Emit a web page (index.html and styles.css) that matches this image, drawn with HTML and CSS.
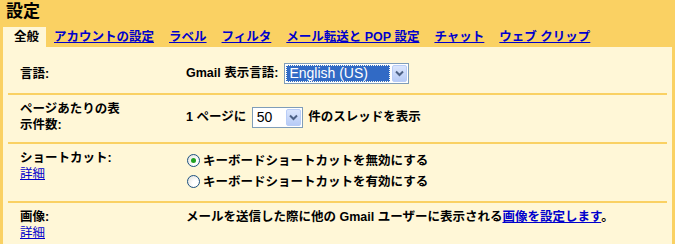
FILE: index.html
```html
<!DOCTYPE html>
<html lang="ja">
<head>
  <meta charset="UTF-8">
  <title>設定</title>
  <link rel="stylesheet" href="styles.css">
</head>
<body>
  <h1 class="title">設定</h1>

  <div class="tabs">
    <span class="tab active">全般</span>
    <a class="tab" href="#">アカウントの設定</a>
    <a class="tab" href="#">ラベル</a>
    <a class="tab" href="#">フィルタ</a>
    <a class="tab" href="#">メール転送と POP 設定</a>
    <a class="tab" href="#">チャット</a>
    <a class="tab" href="#">ウェブ クリップ</a>
  </div>

  <div class="panel">
    <div class="row first">
      <div class="label">言語:</div>
      <div class="value">
        Gmail 表示言語:<span class="select wide">
          <span class="select-text focused">English (US)</span>
          <span class="select-btn"><svg width="9" height="7" viewBox="0 0 9 7"><path d="M1 1.5 L4.5 5 L8 1.5" fill="none" stroke="#4d6185" stroke-width="2"/></svg></span>
        </span>
      </div>
    </div>

    <div class="row">
      <div class="label"><span class="label-text">ページあたりの表示件数:</span></div>
      <div class="value center">
        1 ページに <span class="select narrow">
          <span class="select-text">50</span>
          <span class="select-btn"><svg width="9" height="7" viewBox="0 0 9 7"><path d="M1 1.5 L4.5 5 L8 1.5" fill="none" stroke="#4d6185" stroke-width="2"/></svg></span>
        </span> 件のスレッドを表示
      </div>
    </div>

    <div class="row">
      <div class="label">
        ショートカット:<br>
        <a class="more" href="#">詳細</a>
      </div>
      <div class="value">
        <div class="radio-line"><span class="radio checked"></span>キーボードショートカットを無効にする</div>
        <div class="radio-line"><span class="radio"></span>キーボードショートカットを有効にする</div>
      </div>
    </div>

    <div class="row">
      <div class="label">
        画像:<br>
        <a class="more" href="#">詳細</a>
      </div>
      <div class="value">
        メールを送信した際に他の Gmail ユーザーに表示される<a class="link" href="#">画像を設定します</a>。
      </div>
    </div>
  </div>
</body>
</html>
```

FILE: styles.css
```css
body {
  margin: 0;
  background: #fad163;
  font-family: "Liberation Sans", "Noto Sans CJK JP", sans-serif;
  font-size: 12.5px;
  font-weight: bold;
  color: #000;
  overflow: hidden;
}
.title {
  margin: 0;
  padding: 0 6px 3px;
  font-size: 17px;
  line-height: 24px;
}
.tabs {
  display: flex;
  margin-left: 3px;
  height: 20px;
  line-height: 20px;
}
.tab {
  margin-right: 15px;
  color: #0000cc;
  white-space: nowrap;
}
.tab.active {
  color: #000;
  background: #fff7d7;
  padding: 0 7px 0 11px;
  margin-right: 8px;
}
.panel {
  margin: 0 3px;
  background: #fff7d7;
  padding: 10px 5px 0;
  min-height: 200px;
}
.row {
  display: grid;
  grid-template-columns: 178px 1fr;
  padding: 6px 0 9px;
  border-bottom: 2px solid #fad163;
  line-height: 16px;
}
.row.first {
  align-items: center;
}
.label {
  padding-left: 12px;
}
.label-text {
  display: block;
  width: 108px;
}
.value {
  white-space: nowrap;
}
.value.center {
  align-self: center;
}
.more {
  color: #0000cc;
  font-weight: normal;
}
.link {
  color: #0000cc;
}
.select {
  display: inline-flex;
  vertical-align: middle;
  height: 21px;
  box-sizing: border-box;
  border: 1px solid #7f9db9;
  background: #fff;
  font-weight: normal;
  font-size: 14px;
  line-height: 17px;
}
.select.wide {
  width: 125px;
  margin-left: 6px;
}
.select.narrow {
  width: 51px;
  margin: 0 2px;
}
.select-text {
  flex: 1;
  margin: 1px;
  padding: 0 3px;
  color: #000;
}
.select-text.focused {
  background: #316ac5;
  color: #fff;
  outline: 1px dotted #ffe;
  outline-offset: -1px;
}
.select-btn {
  width: 15px;
  margin: 1px;
  display: flex;
  align-items: center;
  justify-content: center;
  border: 1px solid #b9cdf7;
  border-radius: 2px;
  background: linear-gradient(#dbe6fd, #b7cbf6);
  box-sizing: border-box;
}
.radio-line {
  display: flex;
  align-items: center;
  height: 21px;
}
.radio {
  width: 13px;
  height: 13px;
  box-sizing: border-box;
  border: 1px solid #1c5180;
  border-radius: 50%;
  margin: 0 3px 0 1px;
  background: radial-gradient(circle at 70% 70%, #fff 30%, #dcdcd7);
  position: relative;
}
.radio.checked::after {
  content: "";
  position: absolute;
  left: 3px;
  top: 3px;
  width: 5px;
  height: 5px;
  border-radius: 50%;
  background: #21a121;
}
```
